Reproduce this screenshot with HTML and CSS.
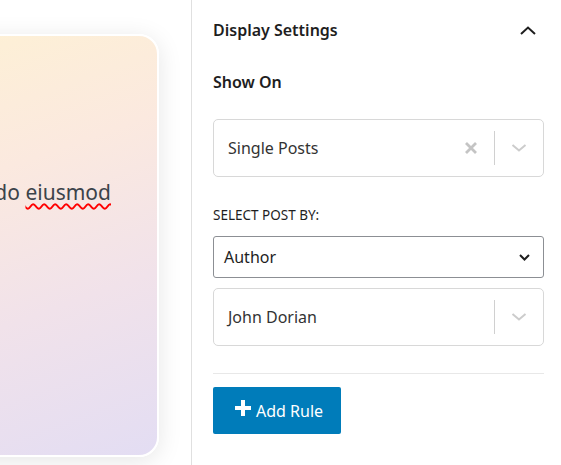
FILE: index.html
```html
<!DOCTYPE html>
<html>
<head>
<meta charset="utf-8">
<link rel="stylesheet" href="styles.css">
</head>
<body>
<div class="layout">
  <div class="canvas">
    <div class="card">
      <p class="card-text">do <span class="misspelled">eiusmod</span></p>
    </div>
  </div>
  <aside class="sidebar">
    <div class="panel-head">
      <h2 class="panel-title">Display Settings</h2>
      <svg class="chev-up" width="16" height="9" viewBox="0 0 16 9"><path d="M1 8 L8 1.5 L15 8" fill="none" stroke="#1e1e1e" stroke-width="2"/></svg>
    </div>
    <h3 class="field-title">Show On</h3>
    <div class="rs-select">
      <span class="rs-value">Single Posts</span>
      <svg class="rs-clear" width="14" height="14" viewBox="0 0 14 14"><path d="M2 2 L12 12 M12 2 L2 12" stroke="#c4c4c4" stroke-width="2.8"/></svg>
      <span class="rs-sep"></span>
      <svg class="rs-arrow" width="16" height="8" viewBox="0 0 16 8"><path d="M1.5 1 L8 6.5 L14.5 1" fill="none" stroke="#cccccc" stroke-width="2"/></svg>
    </div>
    <div class="label">SELECT POST BY:</div>
    <div class="native-select">
      <span>Author</span>
      <svg width="11" height="7" viewBox="0 0 11 7"><path d="M1 1 L5.5 5.5 L10 1" fill="none" stroke="#1e1e1e" stroke-width="2"/></svg>
    </div>
    <div class="rs-select">
      <span class="rs-value">John Dorian</span>
      <span class="rs-sep"></span>
      <svg class="rs-arrow" width="16" height="8" viewBox="0 0 16 8"><path d="M1.5 1 L8 6.5 L14.5 1" fill="none" stroke="#cccccc" stroke-width="2"/></svg>
    </div>
    <hr class="divider">
    <button class="add-btn">
      <svg width="18" height="16" viewBox="0 0 18 16"><path d="M9 0 V16 M1 8 H17" stroke="#fff" stroke-width="4"/></svg>
      <span>Add Rule</span>
    </button>
  </aside>
</div>
</body>
</html>
```
FILE: styles.css
```css
html, body {
  margin: 0;
  padding: 0;
  background: #fff;
  font-family: "Noto Sans", "Open Sans", sans-serif;
  color: #1e1e1e;
}
.layout {
  display: flex;
  width: 561px;
  height: 465px;
  overflow: hidden;
}
.canvas {
  width: 192px;
  flex: none;
  border-right: 1px solid #e0e0e0;
  overflow: hidden;
  padding-top: 34px;
  box-sizing: border-box;
}
.card {
  width: 300px;
  height: 423px;
  margin-left: -141px;
  box-sizing: border-box;
  border: 2px solid #fff;
  border-radius: 20px;
  background: linear-gradient(160deg, #fef2d3 0%, #fbe9df 35%, #f1e2ea 65%, #e3ddf3 100%);
  box-shadow: 0 4px 24px rgba(0,0,0,0.10);
  display: flex;
  flex-direction: column;
  padding-top: 142px;
}
.card-text {
  margin: 0;
  text-align: right;
  padding-right: 46px;
  font-size: 21px;
  color: #3c434a;
  white-space: nowrap;
}
.misspelled {
  text-decoration: underline wavy #f00;
  text-decoration-thickness: 1.5px;
  text-underline-offset: 3px;
}
.sidebar {
  flex: 1;
  padding: 17px 17px 0 21px;
  display: flex;
  flex-direction: column;
}
.panel-head {
  display: flex;
  align-items: center;
  justify-content: space-between;
  padding-right: 8px;
  height: 26px;
}
.panel-title {
  margin: 0;
  font-size: 16px;
  font-weight: 600;
}
.chev-up { display: block; }
.field-title {
  margin: 28px 0 0;
  font-size: 16px;
  font-weight: 600;
  line-height: 22px;
}
.rs-select {
  margin-top: 26px;
  height: 58px;
  box-sizing: border-box;
  border: 1px solid #d8d8d8;
  border-radius: 5px;
  display: flex;
  align-items: center;
  padding: 0 16px 0 14px;
}
.rs-value {
  flex: 1;
  font-size: 16px;
  color: #333;
}
.rs-clear { margin-right: 16px; }
.rs-sep {
  width: 1px;
  height: 34px;
  background: #d0d0d0;
  margin-right: 16px;
}
.label {
  margin-top: 29px;
  font-size: 13.5px;
  line-height: 18px;
  text-transform: uppercase;
  color: #1e1e1e;
}
.native-select {
  margin-top: 12px;
  height: 42px;
  box-sizing: border-box;
  border: 1px solid #8c8f94;
  border-radius: 3px;
  display: flex;
  align-items: center;
  justify-content: space-between;
  padding: 0 13px 0 10px;
  font-size: 16px;
}
.native-select + .rs-select { margin-top: 10px; }
.divider {
  border: 0;
  border-top: 1px solid #e8e8e8;
  margin: 27px 0 0;
}
.add-btn {
  margin-top: 13px;
  align-self: flex-start;
  width: 128px;
  height: 47px;
  border: 0;
  border-radius: 2px;
  background: #007cba;
  color: #fff;
  font-family: inherit;
  font-size: 16px;
  display: flex;
  align-items: center;
  padding: 0 0 0 21px;
  gap: 4px;
}
.add-btn svg { margin-top: -5px; }
```
